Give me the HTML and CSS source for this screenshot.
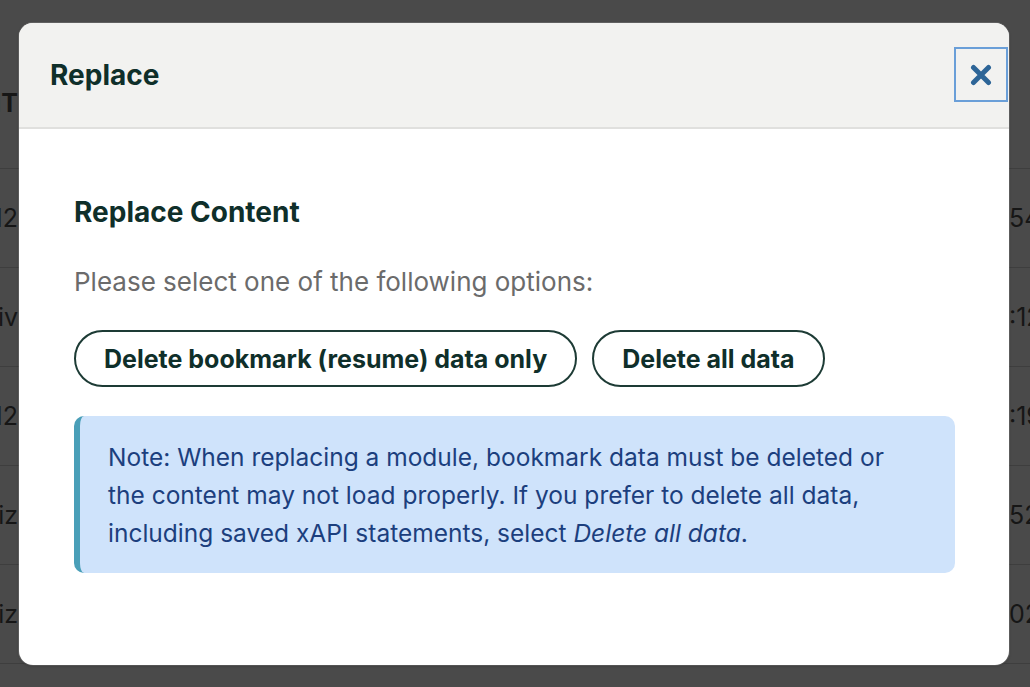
FILE: index.html
```html
<!DOCTYPE html>
<html lang="en">
<head>
<meta charset="utf-8">
<title>Replace</title>
<link rel="stylesheet" href="styles.css">
</head>
<body>
<div class="backdrop">
  <div class="table">
    <div class="trow thead"><div class="cell-l">CONTENT</div><div class="cell-r"></div></div>
    <div class="trow"><div class="cell-l">2012</div><div class="cell-r">54</div></div>
    <div class="trow"><div class="cell-l">Archiv</div><div class="cell-r">:12</div></div>
    <div class="trow"><div class="cell-l">2012</div><div class="cell-r">:19</div></div>
    <div class="trow"><div class="cell-l">Quiz</div><div class="cell-r">52</div></div>
    <div class="trow"><div class="cell-l">Quiz</div><div class="cell-r">02</div></div>
    <div class="trow"><div class="cell-l"></div><div class="cell-r"></div></div>
  </div>
</div>

<div class="modal" role="dialog" aria-labelledby="modal-title">
  <div class="modal-header">
    <h1 class="modal-title" id="modal-title">Replace</h1>
    <button class="close-btn" aria-label="Close">
      <svg width="22" height="22" viewBox="0 0 22 22" aria-hidden="true">
        <path d="M3.5 3.5 L18.5 18.5 M18.5 3.5 L3.5 18.5" stroke="#2d6597" stroke-width="5" stroke-linecap="round"/>
      </svg>
    </button>
  </div>
  <div class="modal-body">
    <h2 class="section-title">Replace Content</h2>
    <p class="lead">Please select one of the following options:</p>
    <div class="actions">
      <button class="pill">Delete bookmark (resume) data only</button>
      <button class="pill">Delete all data</button>
    </div>
    <div class="note">Note: When replacing a module, bookmark data must be deleted or the content may not load properly. If you prefer to delete all data, including saved xAPI statements, select <em>Delete all data</em>.</div>
  </div>
</div>
</body>
</html>
```

FILE: styles.css
```css
html, body {
  margin: 0;
  padding: 0;
  height: 100%;
}
body {
  background: #4a4a4a;
  font-family: Inter, "Noto Sans", "Liberation Sans", sans-serif;
  overflow: hidden;
}

/* dimmed table behind the dialog */
.backdrop {
  position: fixed;
  inset: 0;
  background: #4a4a4a;
}
.table {
  padding-top: 38px;
  color: #161616;
  font-size: 25px;
}
.trow {
  display: grid;
  grid-template-columns: 18px 1fr 21px;
  align-items: center;
  height: 98px;
  border-top: 1px solid #3e3e3e;
}
.trow.thead {
  height: 130px;
  border-top: none;
  font-weight: 700;
}
.cell-l {
  display: flex;
  justify-content: flex-end;
  white-space: nowrap;
}
.cell-r {
  grid-column: 3;
  white-space: nowrap;
}

/* dialog */
.modal {
  position: fixed;
  left: 19px;
  top: 23px;
  width: 990px;
  height: 642px;
  background: #ffffff;
  border-radius: 14px;
  overflow: hidden;
  box-shadow: 0 1px 3px rgba(0, 0, 0, 0.25), 0 0 0 1px rgba(255, 255, 255, 0.15);
}
.modal-header {
  display: flex;
  align-items: center;
  justify-content: space-between;
  height: 104px;
  padding: 0 1px 0 31px;
  background: #f2f2f0;
  border-bottom: 2px solid #e0e0de;
}
.modal-title {
  margin: 0;
  font-size: 28px;
  font-weight: 700;
  color: #0f2f2a;
}
.close-btn {
  display: flex;
  align-items: center;
  justify-content: center;
  width: 54px;
  height: 55px;
  margin-top: -1px;
  padding: 0;
  background: #f2f2f0;
  border: 2px solid #6a9fd8;
  cursor: pointer;
}

.modal-body {
  padding: 67px 54px 0 55px;
}
.section-title {
  margin: 0;
  font-size: 28px;
  line-height: 32px;
  font-weight: 700;
  color: #0f2f2a;
}
.lead {
  margin: 39px 0 0;
  font-size: 26px;
  line-height: 30px;
  color: #6b6b6b;
}
.actions {
  display: flex;
  gap: 15px;
  margin-top: 33px;
}
.pill {
  height: 57px;
  padding: 0 28px;
  font-family: inherit;
  font-size: 25px;
  font-weight: 700;
  color: #0f2f2a;
  background: #ffffff;
  border: 2px solid #1d3b35;
  border-radius: 29px;
  cursor: pointer;
}
.note {
  margin-top: 29px;
  padding: 22px 30px 21px 28px;
  background: #cfe3fb;
  border-left: 6px solid #4a9fb8;
  border-radius: 10px;
  font-size: 24.5px;
  line-height: 38px;
  color: #1c3f7e;
}
.note em {
  font-style: italic;
}
```
